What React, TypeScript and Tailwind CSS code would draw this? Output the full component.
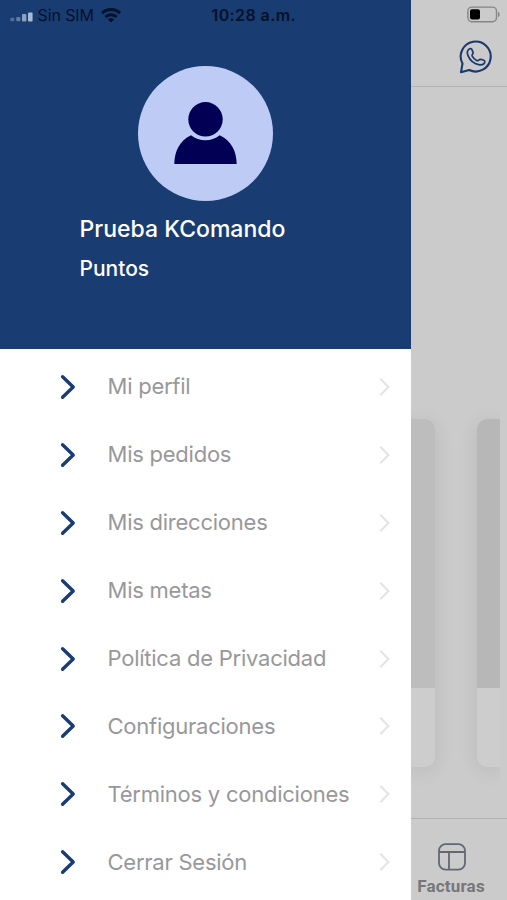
interface ChevronProps {
  className: string;
}

const menuItems = [
  'Mi perfil',
  'Mis pedidos',
  'Mis direcciones',
  'Mis metas',
  'Política de Privacidad',
  'Configuraciones',
  'Términos y condiciones',
  'Cerrar Sesión',
];

function BulletChevron({ className }: ChevronProps) {
  return (
    <svg className={className} viewBox="0 0 16 26" fill="none" stroke="currentColor" strokeWidth={3.4} strokeLinecap="round" strokeLinejoin="round">
      <path d="M2.6 2.8L13.2 13L2.6 23.2" />
    </svg>
  );
}

function DisclosureChevron({ className }: ChevronProps) {
  return (
    <svg className={className} viewBox="0 0 12 20" fill="none" stroke="currentColor" strokeWidth={2.1}>
      <path d="M1.3 1.8L9.4 10L1.3 18.2" />
    </svg>
  );
}

function SignalIcon() {
  return (
    <svg className="mt-[3px] h-[10px] w-[23px]" viewBox="0 0 23 10" fill="#a5bbd8">
      <rect x="0.3" y="5.8" width="4" height="3.4" rx="1" opacity="0.4" />
      <rect x="6.2" y="5" width="4.2" height="4.2" rx="1" opacity="0.5" />
      <rect x="12" y="2" width="4.4" height="7.4" rx="1" opacity="0.8" />
      <rect x="18" y="0.4" width="4.6" height="9" rx="1" />
    </svg>
  );
}

function WifiIcon() {
  return (
    <svg className="h-[15px] w-5" viewBox="0 0 20 15" fill="none" stroke="#04122b" strokeWidth={3.1}>
      <path d="M1 5.2a12.8 12.8 0 0 1 18 0" />
      <path d="M4.4 9a8 8 0 0 1 11.2 0" />
      <path d="M10 14.6L6.9 11.5a4.4 4.4 0 0 1 6.2 0z" fill="#04122b" stroke="none" />
    </svg>
  );
}

function Avatar() {
  return (
    <div className="flex size-[135px] justify-center rounded-full bg-[#becbf5] pt-[36px]">
      <svg className="h-[63px] w-[63px]" viewBox="0 0 63 63" fill="#020055">
        <circle cx="31.5" cy="17.3" r="17.2" />
        <path d="M17 33.2C5.5 38.5 0.5 49.5 0.3 62H62.7C62.5 49.5 57.5 38.5 45.6 33.2C37.5 40 25.5 40 17 33.2Z" />
      </svg>
    </div>
  );
}

function WhatsAppIcon() {
  return (
    <svg className="h-[34px] w-[34px]" viewBox="0 0 34 34" fill="none" stroke="#1b386f" strokeWidth={2.1} strokeLinejoin="round">
      <path d="M2 32.2L3.5 23.6A15 15 0 1 1 10.2 30Z" />
      <path
        strokeWidth={1.7}
        d="M10 9.2C8.2 10.6 8 13.2 9 15.6C11 20.2 14.8 23.6 19.6 24.6C22.4 25.2 25 24.4 25.8 22.2C26.1 21.2 25.6 20.6 24.8 20.3L22 19.4C21.2 19.1 20.6 19.3 20.1 19.9C19.3 20.8 18.6 21 17.6 20.5C15.6 19.5 14.2 18 13.2 16.2C12.8 15.4 12.9 14.9 13.6 14.2C14.2 13.6 14.3 13 14 12.2L12.9 9.6C12.4 8.4 11 8.4 10 9.2Z"
      />
    </svg>
  );
}

function BatteryIcon() {
  return (
    <svg className="mt-[-2px] h-[17px] w-[34px]" viewBox="0 0 34 17">
      <rect x="0.9" y="1.1" width="28.6" height="14.6" rx="4" fill="none" stroke="#858585" strokeWidth="1.4" />
      <rect x="3" y="3.2" width="10" height="10.4" rx="2" fill="#000" />
      <path d="M31 5.8c2.2 1 2.2 4.4 0 5.4z" fill="#858585" />
    </svg>
  );
}

function InvoiceIcon() {
  return (
    <svg className="ml-[1.5px] h-[28px] w-[28px]" viewBox="0 0 28 28" fill="none" stroke="#626873" strokeWidth={1.8}>
      <rect x="1" y="1.2" width="26" height="25.4" rx="6.5" />
      <path d="M1 9h26M11 9v17.6" />
    </svg>
  );
}

function Drawer() {
  return (
    <aside className="flex w-[411px] shrink-0 flex-col bg-white">
      <header className="flex h-[349px] flex-col bg-[#193c72]">
        <div className="flex h-[30px] items-center pl-[9.5px] text-[16px] leading-[30px] text-[#04122b]">
          <SignalIcon />
          <span className="w-[68px] pl-[5px] tracking-[-0.1px]">Sin SIM</span>
          <WifiIcon />
          <span className="ml-[91px] font-semibold tracking-[0.4px] whitespace-nowrap">10:28 a.m.</span>
        </div>
        <div className="mt-[36px] flex justify-center">
          <Avatar />
        </div>
        <div className="mt-[12px] pl-[79.5px] text-white">
          <p className="text-[23px] leading-[32px] font-medium">Prueba KComando</p>
          <p className="mt-[8px] text-[21px] leading-[32px] font-medium">Puntos</p>
        </div>
      </header>
      <nav className="flex flex-col pt-[4px]">
        {menuItems.map((item) => (
          <a key={item} className="flex h-[67.9px] items-center pr-[20px] pl-[60px]">
            <BulletChevron className="h-[26px] w-[16px] text-[#193c72]" />
            <span className="ml-[31.5px] flex-1 text-[22px] tracking-[-0.24px] whitespace-nowrap text-[#98989b]">{item}</span>
            <DisclosureChevron className="h-[20px] w-[12px] text-[#e4e4e6]" />
          </a>
        ))}
      </nav>
    </aside>
  );
}

function DimmedPage() {
  return (
    <main className="flex flex-1 flex-col overflow-hidden bg-[#cbcbcb]">
      <header className="flex h-[87px] flex-col border-b border-[#b3b3b3]">
        <div className="flex h-[30px] items-center justify-end pr-[6px]">
          <BatteryIcon />
        </div>
        <div className="flex justify-end pt-[10px] pr-[14.5px]">
          <WhatsAppIcon />
        </div>
      </header>
      <div className="mr-[7px] flex flex-1 justify-between overflow-hidden pt-[332px]">
        <div className="h-[348px] w-[24px] overflow-hidden rounded-r-[10px] bg-[#cdcdcd] shadow-[0_4px_20px_rgba(0,0,0,0.09)]">
          <div className="h-[269px] bg-[#bdbdbd]" />
        </div>
        <div className="h-[348px] w-[23px] overflow-hidden rounded-l-[10px] bg-[#cdcdcd] shadow-[0_4px_20px_rgba(0,0,0,0.09)]">
          <div className="h-[269px] bg-[#b7b7b7]" />
        </div>
      </div>
      <footer className="flex h-[82px] flex-col border-t border-[#b3b3b3] pt-[24px] pl-[5px]">
        <div className="flex w-[70px] flex-col items-center">
          <InvoiceIcon />
          <span className="mt-[5px] font-[Roboto] text-[17px] leading-[20px] font-bold tracking-[0.2px] text-[#77777a]">Facturas</span>
        </div>
      </footer>
    </main>
  );
}

export default function App() {
  return (
    <div className="flex h-[900px] w-[507px] overflow-hidden font-[Inter,sans-serif]">
      <Drawer />
      <DimmedPage />
    </div>
  );
}
